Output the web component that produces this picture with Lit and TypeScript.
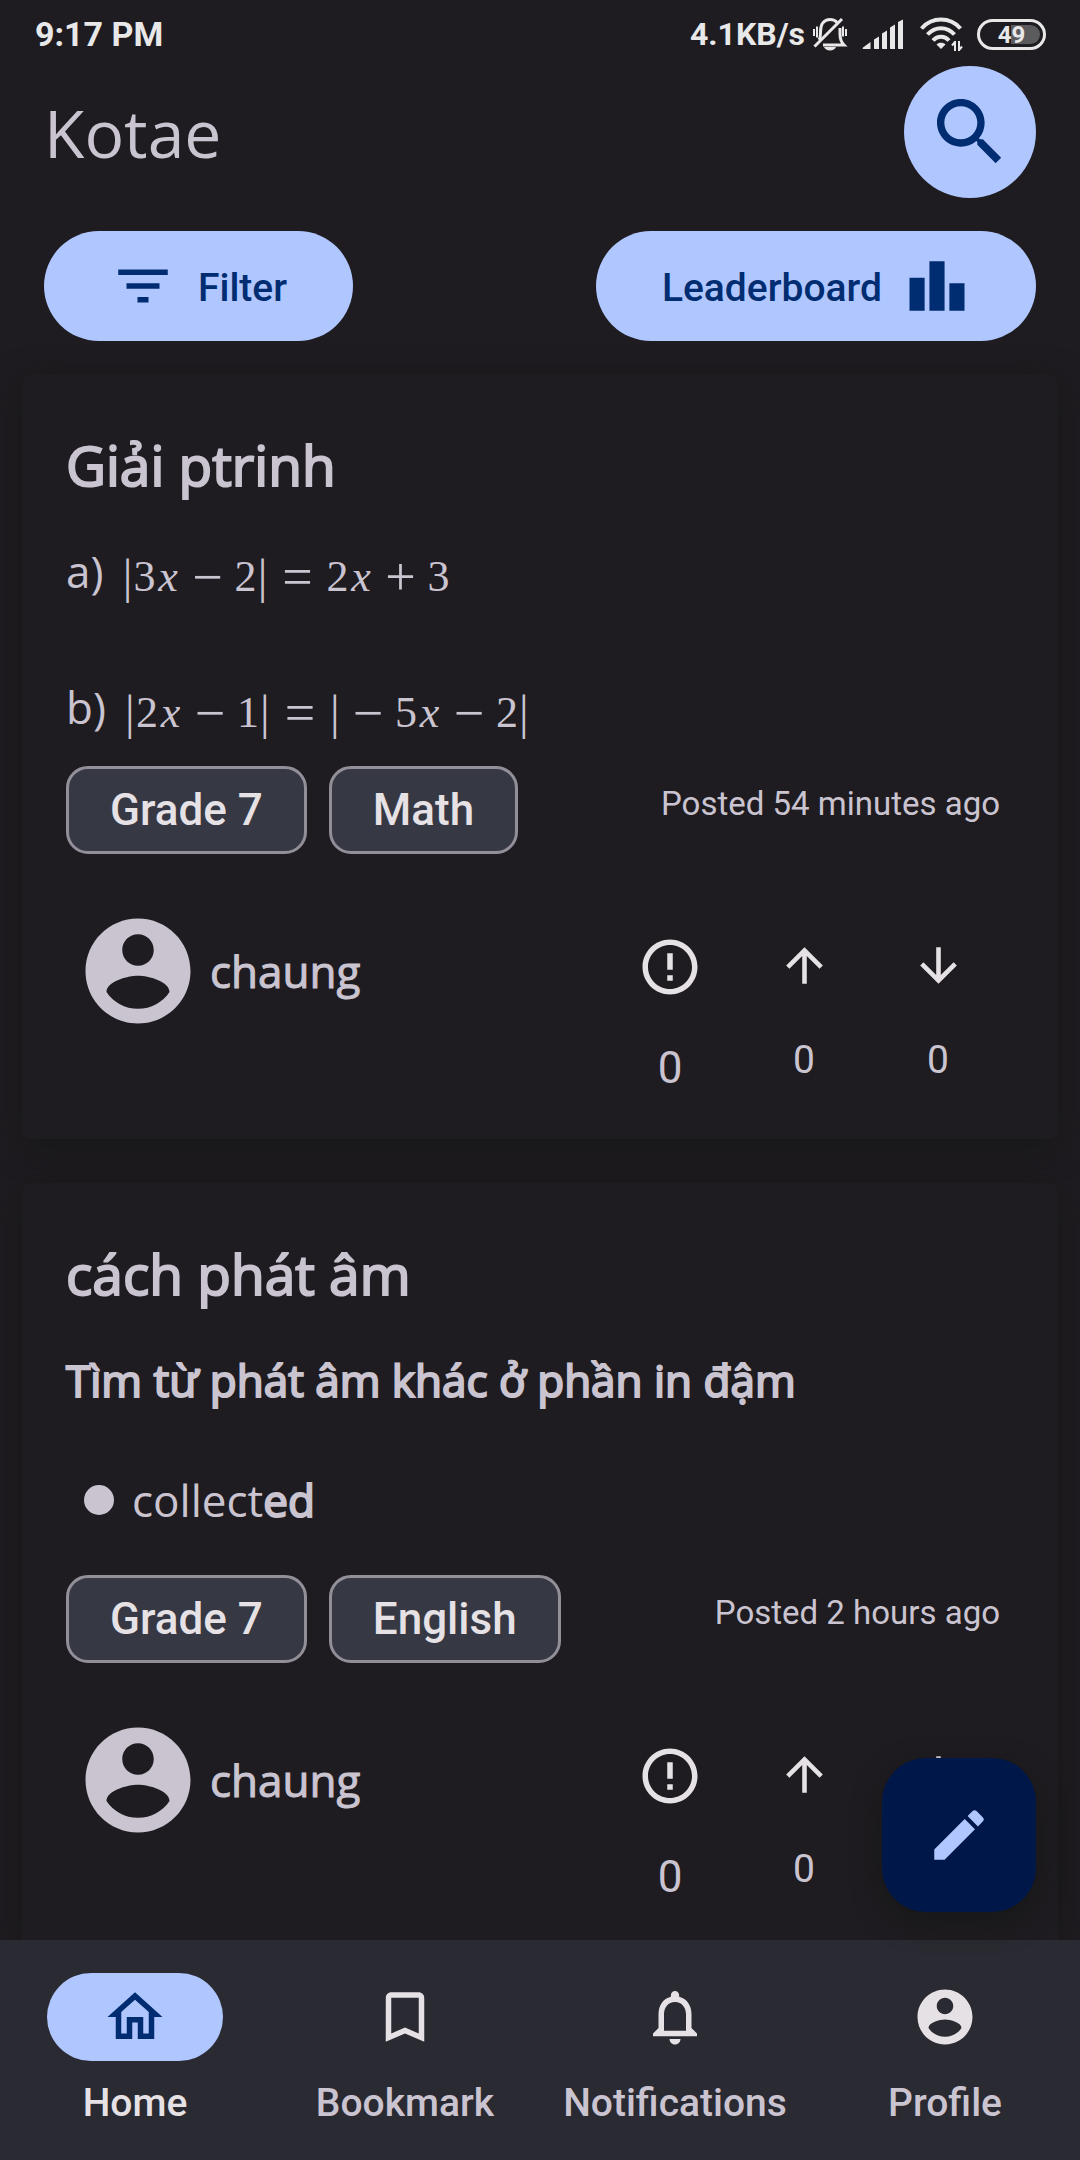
import { LitElement, html, svg, css, nothing } from "lit";
import type { TemplateResult } from "lit";
import { customElement, property } from "lit/decorators.js";
import { classMap } from "lit/directives/class-map.js";

const PATHS = {
  search:
    "M15.5 14h-.79l-.28-.27C15.41 12.59 16 11.11 16 9.5 16 5.91 13.09 3 9.5 3S3 5.91 3 9.5 5.91 16 9.5 16c1.61 0 3.09-.59 4.23-1.57l.27.28v.79l5 4.99L20.49 19l-4.99-5zm-6 0C7.01 14 5 11.99 5 9.5S7.01 5 9.5 5 14 7.01 14 9.5 11.99 14 9.5 14z",
  filter: "M10 18h4v-2h-4v2zM3 6v2h18V6H3zm3 7h12v-2H6v2z",
  leaderboard: "M7.5 21H2V9h5.5v12zm7.25-18h-5.5v18h5.5V3zM22 11h-5.5v10H22V11z",
  account:
    "M12 2C6.48 2 2 6.48 2 12s4.48 10 10 10 10-4.48 10-10S17.52 2 12 2zm0 3c1.66 0 3 1.34 3 3s-1.34 3-3 3-3-1.34-3-3 1.34-3 3-3zm0 14.2c-2.5 0-4.71-1.28-6-3.22.03-1.99 4-3.08 6-3.08 1.99 0 5.97 1.09 6 3.08-1.29 1.94-3.5 3.22-6 3.22z",
  report:
    "M11 15h2v2h-2zm0-8h2v6h-2zm.99-5C6.47 2 2 6.48 2 12s4.47 10 9.99 10C17.52 22 22 17.52 22 12S17.52 2 11.99 2zM12 20c-4.42 0-8-3.58-8-8s3.58-8 8-8 8 3.58 8 8-3.58 8-8 8z",
  up: "M4 12l1.41 1.41L11 7.83V20h2V7.83l5.58 5.59L20 12l-8-8-8 8z",
  down: "M20 12l-1.41-1.41L13 16.17V4h-2v12.17l-5.58-5.59L4 12l8 8 8-8z",
  edit: "M3 17.25V21h3.75L17.81 9.94l-3.75-3.75L3 17.25zM20.71 7.04c.39-.39.39-1.02 0-1.41l-2.34-2.34c-.39-.39-1.02-.39-1.41 0l-1.83 1.83 3.75 3.75 1.83-1.83z",
  home: "M12 5.69l5 4.5V18h-2v-6H9v6H7v-7.81l5-4.5M12 3L2 12h3v8h6v-6h2v6h6v-8h3L12 3z",
  bookmark: "M17 3H7c-1.1 0-1.99.9-1.99 2L5 21l7-3 7 3V5c0-1.1-.9-2-2-2zm0 15l-5-2.18L7 18V5h10v13z",
  bell: "M12 22c1.1 0 2-.9 2-2h-4c0 1.1.9 2 2 2zm6-6v-5c0-3.07-1.63-5.64-4.5-6.32V4c0-.83-.67-1.5-1.5-1.5s-1.5.67-1.5 1.5v.68C7.64 5.36 6 7.92 6 11v5l-2 2v1h16v-1l-2-2zm-2 1H8v-6c0-2.48 1.51-4.5 4-4.5s4 2.02 4 4.5v6z",
};

const icon = (name: keyof typeof PATHS) =>
  html`<svg viewBox="0 0 24 24" fill="currentColor" aria-hidden="true">${svg`<path d=${PATHS[name]}></path>`}</svg>`;

const reset = css`
  * {
    box-sizing: border-box;
  }
  button {
    margin: 0;
    padding: 0;
    border: 0;
    background: none;
    color: inherit;
    font: inherit;
    cursor: pointer;
  }
  svg {
    display: block;
    flex: none;
  }
  h1,
  h2,
  p,
  ul {
    margin: 0;
    padding: 0;
    font-weight: 400;
  }
`;

@customElement("status-bar")
class StatusBar extends LitElement {
  static styles = [
    reset,
    css`
      :host {
        display: flex;
        align-items: center;
        justify-content: space-between;
        height: 66px;
        padding: 2px 34px 0 35px;
        color: #e9e8e9;
        font-size: 34px;
        font-weight: 700;
      }
      .right {
        display: flex;
        align-items: center;
        font-size: 32px;
      }
      .mute {
        width: 36px;
        height: 34px;
        margin: 0 14px 0 7px;
      }
      .signal {
        width: 42px;
        height: 30px;
        margin-right: 15px;
      }
      .wifi {
        width: 44px;
        height: 34px;
        margin-right: 14px;
      }
      .battery {
        display: flex;
        align-items: center;
        justify-content: center;
        width: 69px;
        height: 31px;
        border: 3px solid currentColor;
        border-radius: 16px;
        padding: 3px;
      }
      .level {
        flex: 1;
        height: 19px;
        border-radius: 10px;
        background: linear-gradient(90deg, transparent 49%, #5b5a5d 49%);
        font-size: 24px;
        line-height: 20px;
        text-align: center;
      }
    `,
  ];

  render() {
    return html`
      <span>9:17 PM</span>
      <div class="right">
        <span>4.1KB/s</span>
        <svg class="mute" viewBox="0 0 36 34" fill="none" stroke="currentColor" stroke-width="3" aria-hidden="true">
          <path d="M7 23c1.500-2 1.500-4 1.500-8C8.500 7 12 2.500 18 2.500c3 0 5.500 1 7 3"></path>
          <path d="M28 11v6c0 5 1 8 4 11H11"></path>
          <path d="M2.500 29.500 30 2"></path>
          <path d="M2 12v7M5 9.500v11M31 9.500v10M34 12v7" stroke-width="2"></path>
          <path d="M12 30h12c-1 2-3 3.500-6 3.500S13 32 12 30z" fill="currentColor" stroke="none"></path>
        </svg>
        <svg class="signal" viewBox="0 0 42 30" fill="currentColor" aria-hidden="true">
          <path
            d="M1 28.500 8.500 23v7H2c-1.500 0-1.800-.6-1-1.500zM12 20.500l5-3V30h-4c-.6 0-1-.4-1-1zM20 14.500l5-3V30h-4c-.6 0-1-.4-1-1zM28 8.500l5-3V30h-4c-.6 0-1-.4-1-1zM36 3l5-2.500V30h-4c-.6 0-1-.4-1-1z"
          ></path>
        </svg>
        <svg class="wifi" viewBox="0 0 44 34" fill="none" stroke="currentColor" stroke-width="4" aria-hidden="true">
          <path d="M2.500 11.500C13-.4 31-.4 41.500 11.500"></path>
          <path d="M8.500 17.500c7.500-8.500 19.500-8.500 27 0"></path>
          <path d="M14 23.500c4.500-5 11.500-5 16 0"></path>
          <path d="M17.500 27.500c2-2.500 7-2.500 9 0L22 32z" fill="currentColor" stroke="none"></path>
          <path d="M36 34V24M40 24v10M36 25l-3 3.500M40 33l3-3.500" stroke-width="2"></path>
        </svg>
        <span class="battery"><span class="level">49</span></span>
      </div>
    `;
  }
}

type Post = {
  title: string;
  body: TemplateResult;
  tags: string[];
  posted: string;
  author: string;
  comments: number;
  ups: number;
  downs: number;
};

@customElement("post-card")
class PostCard extends LitElement {
  @property({ attribute: false }) post!: Post;

  static styles = [
    reset,
    css`
      :host {
        display: block;
        padding: 52px 53px 41px 44px;
        border-radius: 8px;
        background: #1e1c20;
        box-shadow: 0 8px 30px 2px rgba(20, 20, 18, 0.6);
        color: #cac4d0;
      }
      .title {
        font-family: "Open Sans", "Noto Sans", sans-serif;
        font-size: 55px;
        line-height: 78px;
        -webkit-text-stroke: 2px currentColor;
      }
      .preview {
        min-height: 196px;
        margin-top: 37px;
        font-family: "Open Sans", "Noto Sans", sans-serif;
        font-size: 44px;
        line-height: 60px;
      }
      .strong {
        -webkit-text-stroke: 2px currentColor;
      }
      .line {
        display: flex;
        align-items: flex-start;
        gap: 18px;
        height: 60px;
      }
      .line + .line {
        margin-top: 76px;
      }
      .math {
        display: flex;
        padding-top: 6px;
        font-family: "Liberation Serif", serif;
      }
      .num {
        width: 22px;
        text-align: center;
      }
      .var {
        width: 25px;
        text-align: center;
        font-style: italic;
      }
      .bar {
        width: 12px;
        font-size: 48px;
        text-align: center;
      }
      .op,
      .rel {
        width: 34px;
        margin: 0 10px;
        font-size: 54px;
        text-align: center;
      }
      .rel {
        margin: 0 12px;
      }
      .list {
        display: flex;
        flex-direction: column;
        margin-top: 60px;
        padding-left: 18px;
        list-style: none;
      }
      .item {
        display: flex;
        align-items: center;
        gap: 18px;
      }
      .item::before {
        content: "";
        width: 30px;
        height: 30px;
        border-radius: 50%;
        background: currentColor;
      }
      .meta {
        display: flex;
        justify-content: space-between;
        margin-top: 29px;
      }
      .tags {
        display: flex;
        gap: 22px;
      }
      .tag {
        height: 88px;
        padding: 0 41px;
        border: 3px solid #928f99;
        border-radius: 22px;
        background: #363843;
        color: #e6e1e5;
        font-size: 44px;
        font-weight: 500;
      }
      .posted {
        padding-right: 5px;
        font-size: 33px;
        line-height: 76px;
      }
      .footer {
        display: flex;
        align-items: flex-start;
        justify-content: space-between;
        margin-top: 54px;
      }
      .author {
        display: flex;
        align-items: center;
        gap: 9px;
        padding-left: 9px;
        font-family: "Open Sans", "Noto Sans", sans-serif;
        font-size: 44px;
        -webkit-text-stroke: 1px currentColor;
      }
      .author svg {
        width: 126px;
        height: 126px;
      }
      .stats {
        display: flex;
        align-items: flex-start;
        padding-top: 26px;
      }
      .stat {
        display: flex;
        flex-direction: column;
        align-items: center;
        gap: 38px;
        width: 134px;
        font-size: 39px;
        line-height: 52px;
      }
      .glyph {
        display: flex;
        align-items: center;
        height: 62px;
        color: #e6e1e5;
      }
      .glyph svg {
        width: 55px;
        height: 55px;
      }
      .large {
        font-size: 44px;
        line-height: 60px;
      }
      .large .glyph {
        height: 66px;
      }
      .large .glyph svg {
        width: 66px;
        height: 66px;
      }
    `,
  ];

  render() {
    const p = this.post;
    return html`
      <h2 class="title">${p.title}</h2>
      <div class="preview">${p.body}</div>
      <div class="meta">
        <div class="tags">${p.tags.map((tag) => html`<button class="tag">${tag}</button>`)}</div>
        <span class="posted">${p.posted}</span>
      </div>
      <div class="footer">
        <div class="author">${icon("account")}<span>${p.author}</span></div>
        <div class="stats">
          <button class="stat large" aria-label="Answers">
            <span class="glyph">${icon("report")}</span><span>${p.comments}</span>
          </button>
          <button class="stat" aria-label="Upvote">
            <span class="glyph">${icon("up")}</span><span>${p.ups}</span>
          </button>
          <button class="stat" aria-label="Downvote">
            <span class="glyph">${icon("down")}</span><span>${p.downs}</span>
          </button>
        </div>
      </div>
    `;
  }
}

const kinds: Record<string, string> = { "|": "bar", "−": "op", "+": "op", "=": "rel", x: "var" };

const math = (tokens: string) =>
  html`<span class="math" role="math"
    >${[...tokens].map((t) => html`<span class=${kinds[t] ?? "num"}>${t}</span>`)}</span
  >`;

// Body parts land in the card's shadow tree, so they use its class names.
const posts: Post[] = [
  {
    title: "Giải ptrinh",
    body: html`
      <p class="line"><span>a)</span>${math("|3x−2|=2x+3")}</p>
      <p class="line"><span>b)</span>${math("|2x−1|=|−5x−2|")}</p>
    `,
    tags: ["Grade 7", "Math"],
    posted: "Posted 54 minutes ago",
    author: "chaung",
    comments: 0,
    ups: 0,
    downs: 0,
  },
  {
    title: "cách phát âm",
    body: html`
      <p class="strong">Tìm từ phát âm khác ở phần in đậm</p>
      <ul class="list">
        <li class="item"><span>collect<span class="strong">ed</span></span></li>
      </ul>
    `,
    tags: ["Grade 7", "English"],
    posted: "Posted 2 hours ago",
    author: "chaung",
    comments: 0,
    ups: 0,
    downs: 0,
  },
];

const tabs: { label: string; icon: keyof typeof PATHS }[] = [
  { label: "Home", icon: "home" },
  { label: "Bookmark", icon: "bookmark" },
  { label: "Notifications", icon: "bell" },
  { label: "Profile", icon: "account" },
];

@customElement("app-root")
class AppRoot extends LitElement {
  @property() current = "Home";

  static styles = [
    reset,
    css`
      :host {
        display: flex;
        flex-direction: column;
        height: 100vh;
        overflow: hidden;
        background: #1e1c20;
        color: #cac4d0;
        font-family: Roboto, "Liberation Sans", sans-serif;
      }
      .header,
      .actions {
        display: flex;
        align-items: center;
        justify-content: space-between;
        padding: 0 44px;
      }
      .brand {
        font-family: "Open Sans", "Noto Sans", sans-serif;
        font-size: 66px;
        line-height: 90px;
      }
      .search {
        display: grid;
        place-items: center;
        width: 132px;
        height: 132px;
        border-radius: 50%;
        background: #b0c6ff;
        color: #002c71;
      }
      .search svg {
        width: 88px;
        height: 88px;
      }
      .actions {
        margin-top: 33px;
      }
      .action {
        display: flex;
        align-items: center;
        gap: 22px;
        height: 110px;
        padding: 0 66px;
        border-radius: 55px;
        background: #b0c6ff;
        color: #002c71;
        font-size: 39px;
        font-weight: 500;
      }
      .action svg {
        width: 66px;
        height: 66px;
      }
      .action span {
        padding-top: 3px;
      }
      .main {
        position: relative;
        flex: 1;
        min-height: 0;
      }
      .feed {
        display: flex;
        flex-direction: column;
        gap: 44px;
        height: 100%;
        padding: 33px 22px 0;
        overflow: hidden;
      }
      .card {
        flex: none;
      }
      .fab {
        position: absolute;
        right: 44px;
        bottom: 28px;
        display: grid;
        place-items: center;
        width: 154px;
        height: 154px;
        border-radius: 44px;
        background: #001849;
        color: #b0c6ff;
        box-shadow: 0 10px 28px rgba(20, 20, 20, 0.7);
      }
      .fab svg {
        width: 66px;
        height: 66px;
      }
      .nav {
        display: grid;
        grid-template-columns: repeat(4, 1fr);
        height: 220px;
        padding-top: 33px;
        background: #2a2a32;
      }
      .tab {
        display: flex;
        flex-direction: column;
        align-items: center;
        gap: 16px;
        color: #cac4d0;
        font-size: 39px;
        font-weight: 500;
        line-height: 52px;
        text-decoration: none;
      }
      .pill {
        display: grid;
        place-items: center;
        width: 176px;
        height: 88px;
        border-radius: 44px;
        color: #e6e1e5;
      }
      .pill svg {
        width: 66px;
        height: 66px;
      }
      .active {
        color: #e6e1e5;
      }
      .active .pill {
        background: #b0c6ff;
        color: #002c71;
      }
    `,
  ];

  render() {
    return html`
      <status-bar></status-bar>
      <header class="header">
        <h1 class="brand">Kotae</h1>
        <button class="search" aria-label="Search">${icon("search")}</button>
      </header>
      <div class="actions">
        <button class="action">${icon("filter")}<span>Filter</span></button>
        <button class="action"><span>Leaderboard</span>${icon("leaderboard")}</button>
      </div>
      <main class="main">
        <div class="feed">${posts.map((post) => html`<post-card class="card" .post=${post}></post-card>`)}</div>
        <button class="fab" aria-label="Write a post">${icon("edit")}</button>
      </main>
      <nav class="nav">
        ${tabs.map(
          (tab) => html`
            <a
              href="#${tab.label.toLowerCase()}"
              class=${classMap({ tab: true, active: tab.label === this.current })}
              aria-current=${tab.label === this.current ? "page" : nothing}
            >
              <span class="pill">${icon(tab.icon)}</span>
              <span>${tab.label}</span>
            </a>
          `
        )}
      </nav>
    `;
  }
}
